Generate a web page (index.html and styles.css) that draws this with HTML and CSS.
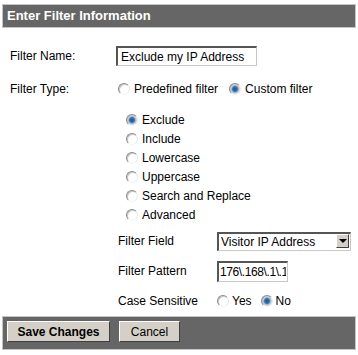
FILE: index.html
```html
<!DOCTYPE html>
<html lang="en">
<head>
    <meta charset="UTF-8">
    <title>Enter Filter Information</title>
    <link rel="stylesheet" href="styles.css">
</head>
<body>
    <div class="panel">
        <div class="header">Enter Filter Information</div>

        <div class="body">
            <div class="row">
                <label class="label" for="filterName">Filter Name:</label>
                <input class="text name" type="text" id="filterName" value="Exclude my IP Address">
            </div>

            <div class="row type-row">
                <span class="label">Filter Type:</span>
                <div class="choices">
                    <label class="choice"><input type="radio" name="ftype"> Predefined filter</label>
                    <label class="choice"><input type="radio" name="ftype" checked> Custom filter</label>
                </div>
            </div>

            <div class="custom">
                <div class="kinds">
                    <label class="choice"><input type="radio" name="kind" checked> Exclude</label>
                    <label class="choice"><input type="radio" name="kind"> Include</label>
                    <label class="choice"><input type="radio" name="kind"> Lowercase</label>
                    <label class="choice"><input type="radio" name="kind"> Uppercase</label>
                    <label class="choice"><input type="radio" name="kind"> Search and Replace</label>
                    <label class="choice"><input type="radio" name="kind"> Advanced</label>
                </div>

                <div class="sub">
                    <span class="label">Filter Field</span>
                    <div class="select-wrap">
                        <select class="select">
                            <option>Visitor IP Address</option>
                        </select>
                        <span class="arrow"></span>
                    </div>

                    <span class="label">Filter Pattern</span>
                    <input class="text pattern" type="text" value="176\.168\.1\.1">

                    <span class="label">Case Sensitive</span>
                    <div class="choices small">
                        <label class="choice"><input type="radio" name="cs"> Yes</label>
                        <label class="choice"><input type="radio" name="cs" checked> No</label>
                    </div>
                </div>
            </div>
        </div>

        <div class="footer">
            <button class="btn save" type="button">Save Changes</button>
            <button class="btn" type="button">Cancel</button>
        </div>
    </div>
</body>
</html>
```

FILE: styles.css
```css
body {
    margin: 0;
    background: #fff;
    font-family: "Liberation Sans", Arial, sans-serif;
    font-size: 12px;
    color: #000;
}

.panel {
    padding: 4px 2px 0 2px;
}

.header {
    background-color: #666;
    border: 1px solid #c4c4c4;
    color: #fff;
    font-weight: bold;
    font-size: 13px;
    height: 22px;
    line-height: 22px;
    padding-left: 4px;
}

.body {
    padding: 18px 0 5px 8px;
}

.row {
    display: grid;
    grid-template-columns: 106px 1fr;
    align-items: center;
}

.type-row {
    margin-top: 16px;
}

.label {
    font-size: 12px;
}

.text {
    font-family: inherit;
    font-size: 12px;
    height: 20px;
    box-sizing: border-box;
    padding: 0 3px;
    border: 1px solid #7f7f7f;
    border-color: #555 #c8c8c8 #c8c8c8 #555;
    border-width: 2px 1px 1px 2px;
    margin: 0;
    background: #fff;
}

.name {
    width: 141px;
}

.choices {
    display: flex;
    gap: 11px;
    padding-left: 2px;
}

.choice {
    display: flex;
    align-items: center;
    gap: 4px;
    white-space: nowrap;
}

input[type="radio"] {
    appearance: none;
    -webkit-appearance: none;
    width: 12px;
    height: 12px;
    margin: 0;
    border-radius: 50%;
    border: 1px solid;
    border-color: #8a8a8a #e8e8e8 #f4f4f4 #8a8a8a;
    background: #fff;
    box-shadow: inset 1px 1px 0 #c8c8c8;
}

input[type="radio"]:checked {
    background: radial-gradient(circle, #1f4d82 0, #3a78b8 2.5px, #9bb8d6 3.5px, #e0e0e0 5px);
}

.custom {
    padding-left: 108px;
    margin-top: 17px;
}

.kinds {
    display: flex;
    flex-direction: column;
    gap: 5px;
    padding-left: 8px;
}

.kinds .choice {
    height: 14px;
}

.sub {
    display: grid;
    grid-template-columns: 99px 1fr;
    grid-auto-rows: 20px;
    row-gap: 10px;
    align-items: center;
    margin-top: 9px;
}

.select-wrap {
    position: relative;
    width: 134px;
    height: 19px;
}

.select {
    appearance: none;
    -webkit-appearance: none;
    font-family: inherit;
    font-size: 12px;
    width: 100%;
    height: 100%;
    border: 1px solid;
    border-color: #555 #c8c8c8 #c8c8c8 #555;
    border-width: 2px 1px 1px 2px;
    padding: 0 0 0 2px;
    background: #fff;
    border-radius: 0;
    margin: 0;
}

.arrow {
    position: absolute;
    right: 2px;
    top: 2px;
    width: 13px;
    height: 14px;
    background: #d4d0c8;
    border: 1px solid;
    border-color: #fff #404040 #404040 #fff;
    box-sizing: border-box;
}

.arrow::after {
    content: "";
    position: absolute;
    left: 2px;
    top: 4px;
    border-left: 4px solid transparent;
    border-right: 4px solid transparent;
    border-top: 4px solid #000;
}

.pattern {
    width: 71px;
    height: 21px;
    padding: 0 1px;
    letter-spacing: -0.4px;
}

.choices.small {
    gap: 9px;
    padding-left: 0;
}

.choices.small .choice {
    gap: 3px;
}

.footer {
    background-color: #666;
    border: 1px solid #c4c4c4;
    padding: 4px 4px 7px 4px;
    display: flex;
    gap: 9px;
}

.btn {
    font-family: inherit;
    font-size: 12px;
    height: 21px;
    padding: 0 8px;
    background: #d4d0c8;
    border: 1px solid;
    border-color: #fff #404040 #404040 #fff;
    color: #000;
}

.save {
    font-weight: bold;
    width: 103px;
}

.btn:not(.save) {
    width: 61px;
}
```
